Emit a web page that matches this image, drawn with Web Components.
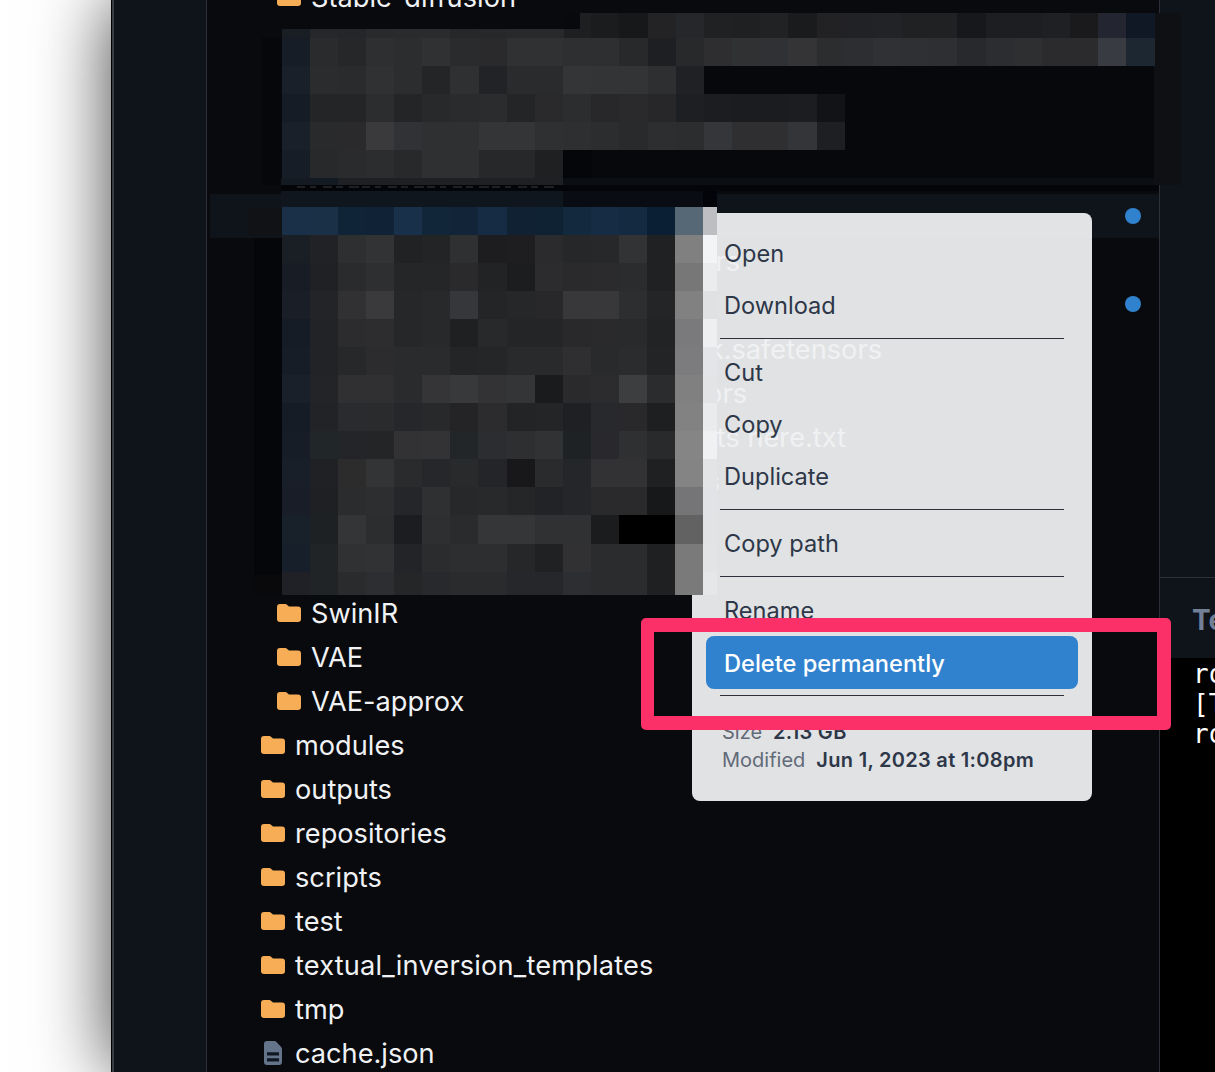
<!DOCTYPE html>
<html>
<head>
<meta charset="utf-8">
<style>
  html, body { margin: 0; height: 1072px; overflow: hidden; background: #fff; }
  body { font-family: Inter, "Liberation Sans", sans-serif; }
</style>
</head>
<body>
<app-window>
  <file-tree>
    <tree-row depth="2" type="folder">Stable-diffusion</tree-row>
    <tree-row depth="2"></tree-row>
    <tree-row depth="2"></tree-row>
    <tree-row depth="2"></tree-row>
    <tree-row depth="2"></tree-row>
    <tree-row depth="2" selected dot></tree-row>
    <tree-row depth="2" end="429">rs</tree-row>
    <tree-row depth="2" dot></tree-row>
    <tree-row depth="2" end="571">k.safetensors</tree-row>
    <tree-row depth="2" end="436">ors</tree-row>
    <tree-row depth="2" end="535">ts here.txt</tree-row>
    <tree-row depth="2" end="409">s</tree-row>
    <tree-row depth="2"></tree-row>
    <tree-row depth="2"></tree-row>
    <tree-row depth="2" type="folder">SwinIR</tree-row>
    <tree-row depth="2" type="folder">VAE</tree-row>
    <tree-row depth="2" type="folder">VAE-approx</tree-row>
    <tree-row depth="1" type="folder">modules</tree-row>
    <tree-row depth="1" type="folder">outputs</tree-row>
    <tree-row depth="1" type="folder">repositories</tree-row>
    <tree-row depth="1" type="folder">scripts</tree-row>
    <tree-row depth="1" type="folder">test</tree-row>
    <tree-row depth="1" type="folder" style="letter-spacing: .18px">textual_inversion_templates</tree-row>
    <tree-row depth="1" type="folder">tmp</tree-row>
    <tree-row depth="1" type="file">cache.json</tree-row>
  </file-tree>
  <terminal-pane slot="side"></terminal-pane>
</app-window>

<context-menu>
  <menu-item>Open</menu-item>
  <menu-item>Download</menu-item>
  <menu-line></menu-line>
  <menu-item>Cut</menu-item>
  <menu-item>Copy</menu-item>
  <menu-item>Duplicate</menu-item>
  <menu-line></menu-line>
  <menu-item>Copy path</menu-item>
  <menu-line></menu-line>
  <menu-item>Rename</menu-item>
  <menu-item active>Delete permanently</menu-item>
  <menu-line></menu-line>
  <menu-meta label="Size">2.13 GB</menu-meta>
  <menu-meta label="Modified">Jun 1, 2023 at 1:08pm</menu-meta>
</context-menu>

<blur-patch></blur-patch>
<mark-box></mark-box>

<script>
class AppWindow extends HTMLElement {
  constructor() {
    super();
    this.attachShadow({ mode: 'open' });
    this.shadowRoot.innerHTML = `
      <style>
        :host {
          display: flex;
          height: 1072px;
          margin-left: 111px;
          background: #090a0e;
          border-left: 1px solid #000;
          box-shadow: 0 0 70px rgba(0, 0, 0, .75);
          overflow: hidden;
        }
        .bar {
          flex: none;
          width: 92px;
          background: #0f131a;
          border-left: 2px solid #3a3c44;
          border-right: 1px solid #2d3038;
        }
        .main { flex: none; width: 952px; overflow: hidden; }
        .side { flex: 1; min-width: 0; border-left: 1px solid #2d3038; }
      </style>
      <div class="bar"></div>
      <div class="main"><slot></slot></div>
      <div class="side"><slot name="side"></slot></div>
    `;
  }
}

class FileTree extends HTMLElement {
  constructor() {
    super();
    this.attachShadow({ mode: 'open' });
    this.shadowRoot.innerHTML = `
      <style>
        :host { display: block; margin-top: -25px; color: #f0f2f5; font-size: 27.2px; }
      </style>
      <slot></slot>
    `;
  }
}

const ICONS = {
  folder: `<svg width="24" height="18" viewBox="0 0 24 18"><path fill="#f6ad55" d="M3 0h5.200c.8 0 1.500.3 2 .9L12 2.600h9a3 3 0 0 1 3 3V15a3 3 0 0 1-3 3H3a3 3 0 0 1-3-3V3a3 3 0 0 1 3-3z"/></svg>`,
  file: `<svg width="18" height="24" viewBox="0 0 18 24"><path fill="#64748b" d="M3 0h7.500c.8 0 1.500.3 2 .9l4.600 5c.6.6.9 1.300.9 2.100V21a3 3 0 0 1-3 3H3a3 3 0 0 1-3-3V3a3 3 0 0 1 3-3z"/><path fill="#111722" d="M3 11.200h12v3.200H3zM3 17.300h12v3.200H3z"/></svg>`
};

class TreeRow extends HTMLElement {
  constructor() {
    super();
    this.attachShadow({ mode: 'open' });
  }
  connectedCallback() {
    const depth = +this.getAttribute('depth');
    const type = this.getAttribute('type');
    const end = this.getAttribute('end');
    this.shadowRoot.innerHTML = `
      <style>
        :host {
          display: flex;
          align-items: center;
          height: 44px;
          padding-left: ${depth == 1 ? 261 - 207 : 277 - 207}px;
          padding-right: 18px;
          white-space: nowrap;
        }
        :host([selected]) { background: #0f131a; transform: translateY(-1px); }
        :host([selected]) .dot { transform: none; }
        .icon { flex: none; display: flex; justify-content: center; width: 24px; margin-right: 10px; }
        .name { flex: none; ${end ? `width: ${end}px; text-align: right;` : ''} }
        .dot { flex: none; margin-left: auto; width: 16px; height: 16px; border-radius: 50%; background: #3182ce; transform: translateY(-1px); }
      </style>
      <span class="icon">${ICONS[type] || ''}</span>
      <span class="name"><slot></slot></span>
      ${this.hasAttribute('dot') ? '<span class="dot"></span>' : ''}
    `;
  }
}

class TerminalPane extends HTMLElement {
  constructor() {
    super();
    this.attachShadow({ mode: 'open' });
    this.shadowRoot.innerHTML = `
      <style>
        :host { display: flex; flex-direction: column; height: 1072px; background: #0f131a; white-space: nowrap; }
        .top { flex: none; height: 577px; border-bottom: 1px solid #2d3038; }
        .tab { flex: none; height: 80px; line-height: 84px; padding-left: 32px; font-size: 28px; font-weight: 700; color: #718096; }
        .term {
          flex: 1;
          background: #000;
          padding: 1px 0 0 33px;
          color: #fff;
          font: 26px/30px "DejaVu Sans Mono", monospace;
        }
      </style>
      <div class="top"></div>
      <div class="tab">Te</div>
      <div class="term">ro<br>[T<br>ro</div>
    `;
  }
}

class ContextMenu extends HTMLElement {
  constructor() {
    super();
    this.attachShadow({ mode: 'open' });
    this.shadowRoot.innerHTML = `
      <style>
        :host {
          position: absolute;
          left: 692px;
          top: 213px;
          box-sizing: border-box;
          width: 400px;
          height: 588px;
          padding: 15px 14px;
          border-radius: 8px;
          background: rgba(239, 240, 242, .94);
          color: #2d3748;
          font-size: 23.6px;
        }
      </style>
      <slot></slot>
    `;
  }
}

class MenuItem extends HTMLElement {
  constructor() {
    super();
    this.attachShadow({ mode: 'open' });
    this.shadowRoot.innerHTML = `
      <style>
        :host { display: flex; align-items: center; box-sizing: border-box; height: 52px; padding: 0 0 2px 18px; border-radius: 8px; }
        :host([active]) {
          height: 53px;
          margin-top: -1px;
          margin-bottom: 1px;
          padding: 2px 0 0 18px;
          background: #3182ce;
          color: #fff;
          font-weight: 500;
        }
      </style>
      <slot></slot>
    `;
  }
}

class MenuLine extends HTMLElement {
  constructor() {
    super();
    this.attachShadow({ mode: 'open' });
    this.shadowRoot.innerHTML = `
      <style>
        :host { display: block; height: 1px; margin: 6px 14px 8px; background: #2d3038; }
      </style>
    `;
  }
}

class MenuMeta extends HTMLElement {
  constructor() {
    super();
    this.attachShadow({ mode: 'open' });
  }
  connectedCallback() {
    this.shadowRoot.innerHTML = `
      <style>
        :host { display: flex; gap: 11px; height: 28px; align-items: center; padding-left: 16px; font-size: 20px; font-weight: 600; letter-spacing: .3px; position: relative; top: 14px; }
        .label { color: #626a78; font-weight: 400; letter-spacing: 0; }
      </style>
      <span class="label">${this.getAttribute('label')}</span>
      <span><slot></slot></span>
    `;
  }
}

// colours read off the pixelated parts of the screenshot, one string per row
const PATCH_TOP = [
  [29, 9, '191d24 26272a 252629 292a2c 2a2b2d 2a2b2d 262729 27282a 28292b 28292b'],
  [38, 28, '161d27 2a2b2d 262729 2e2f31 2c2d2f 303133 2a2b2d 2a2a2c 303133 303133 2e2f31 2e2f31 28292b 1d1f22 27292b 2e2e30 303133 303134 343437 2c2d2f 2d2e31 303134 2f3033 2e2f32 28292c 2c2d30 2e2f31 2b2b2d 2b2b2d 393b42 1c2732'],
  [66, 28, '1a202a 2b2c2e 2a2b2d 303133 2c2d2e 242527 2f3032 222326 2a2b2d 2a2b2d 343537 333436 333436 2e2f31 1f2124'],
  [94, 28, '161c25 232527 242527 2c2d2f 232527 28292b 2a2b2d 2b2c2d 242527 2a2a2c 2c2d2f 28282b 2a2a2c 27272a 1d1f22 1c1d20 1b1c1f 1b1c1f 1b1d20 121316'],
  [122, 28, '1a202a 292a2c 2a2a2c 3a3a3d 313235 2f3032 2f3032 343537 343537 2f3032 2e2f31 2c2d2f 282a2c 2d2e30 2c2d2f 35363a 2f2f31 2f2f31 343538 1e1f22'],
  [150, 28, '171d27 28292b 2a2b2d 2c2d2f 28292b 2f3032 2f3032 27282a 27282a 1f2021 05060a']
];
const PATCH_TOP_RIGHT = '1b1c1e 17181a 232224 26272a 202123 1f2022 212224 1a1b1d 222225 212225 212326 1f2123 1f2123 16181b 1c1e21 1c1e21 1e2023 1a1a1c 232630 0f1824';
const PATCH_LOW = [
  [207, 28, '1a3048 193047 102438 102236 183049 12263a 112438 162c44 0f2133 0f2234 13293e 162c44 142a41 0a1f33 566775', 'bdbec1'],
  [235, 28, '1a1e25 202226 2e2f31 323335 212224 232425 2f3032 1d1d20 1e1e20 2b2b2d 262729 272829 323335 1f2122 808081', 'f3f4f6'],
  [263, 28, '181d25 1f2125 2a2b2d 2e2f31 252628 252628 2a2a2d 222325 1c1d1f 2c2c2e 2a2a2c 2b2b2d 2b2c2e 1f2122 777778', 'ebecee'],
  [291, 28, '1a1f27 222428 313133 3a3a3c 262729 28292b 36373a 232527 262729 28282a 38383a 38383a 2d2e30 242526 818182', 'e0e1e3'],
  [319, 28, '161c25 212326 2c2c2e 2d2d2f 262729 28292b 1f2022 28292b 242527 242527 29292b 2a2a2c 292a2c 222324 7a7a7c', 'eeeff1'],
  [347, 28, '171d26 212326 26282a 2c2c2f 2a2b2d 2a2b2d 232527 242628 292a2c 292a2c 2f2f31 292a2c 2b2c2e 232425 7c7c7e', 'e4e5e8'],
  [375, 28, '1a2029 222427 303032 303032 2a2b2d 353537 38393a 333335 343537 1a1b1d 2a2a2d 2c2c2f 3d3e40 2b2c2d 808081', 'e3e4e6'],
  [403, 28, '161c26 212326 2a2b2e 2a2b2d 26272a 28292b 242427 2c2c2f 222426 232527 1e2023 28292c 29292c 1e1f20 828283', 'eaebed'],
  [431, 28, '171d27 212628 232528 232527 323234 333335 232628 2c2d30 2e2f31 313233 1f2224 29292d 2f3032 292a2b 858586', 'f0f1f3'],
  [459, 28, '191f28 1f2124 2c2c2d 333436 2a2b2d 26272a 292a2c 242528 18181b 2a2b2d 25262a 323235 323235 1f2021 848485', 'e3e4e6'],
  [487, 28, '181d27 1e2023 2b2c2d 2d2e30 252629 2f3032 26282a 28292b 242628 222326 25262a 2a2a2d 2a2a2d 171819 757577', 'e2e3e6'],
  [515, 29, '18202a 1e2124 343536 2c2d2f 1c1d20 2e2f31 2a2b2d 353638 353638 303133 303133 1a1c1e 000000 000000 626263', 'e2e3e5'],
  [544, 28, '17202a 212427 303133 313234 232427 2b2c2e 2d2e30 2d2e30 262729 1f2123 313133 2b2c2e 2b2c2e 1f2021 7a7a7b', 'e3e4e6'],
  [572, 23, '1f2126 212427 2a2b2d 2d2e31 252628 28292c 2a2b2d 2a2b2d 26272a 26272a 2d2e31 2b2c2e 2b2c2e 1f2021 7a7a7b', 'e6e7e9']
];

class BlurPatch extends HTMLElement {
  constructor() {
    super();
    this.attachShadow({ mode: 'open' });
    const rect = (x, y, w, h, fill) => `<rect x="${x}" y="${y}" width="${w}" height="${h}" fill="${fill}"/>`;
    const cell = 28.16, left = 281.5;
    let out = '';
    // soft dark edges the blur left around the two blocks
    out += rect(262, 38, 20, 147, '#06070a');
    out += rect(281, 38, 873, 147, '#07080b');
    out += rect(1154, 13, 27, 172, '#0e1013');
    out += rect(563, 178, 591, 7, '#0b0e13');
    out += rect(281, 178, 57, 7, '#141a22');
    out += rect(338, 178, 225, 7, '#1f2024');
    out += rect(281, 185, 878, 6, '#040508');
    // tops of the letters that stick out under the top block
    for (let x = 297; x < 556; x += 13) {
      out += rect(x, 186, 6 + (x % 5), 2, '#1f2023');
    }
    out += rect(563, 13, 28, 25, '#1e1f21');
    out += rect(563, 13, 17, 16, '#08090c');
    out += rect(254, 238, 28, 337, '#05060a');
    out += rect(254, 575, 28, 20, '#09090c');
    out += rect(247, 207, 35, 28, '#111216');
    out += rect(207, 194, 3, 44, '#090a0e');
    out += rect(281, 191, 282, 16, '#10161e');
    out += rect(563, 191, 140, 16, '#090c12');
    out += rect(703, 191, 14, 16, '#03040a');

    PATCH_TOP.forEach(([y, h, row]) => {
      row.split(' ').forEach((c, i) => { out += rect(left + i * cell, y, cell + .5, h, '#' + c); });
    });
    PATCH_TOP_RIGHT.split(' ').forEach((c, i) => {
      out += rect(left + (i + 11) * cell, 13, cell + .5, 25, '#' + c);
    });
    PATCH_LOW.forEach(([y, h, row, strip]) => {
      row.split(' ').forEach((c, i) => { out += rect(left + i * 28.13, y, 28.6, h, '#' + c); });
      out += rect(703, y, 14, h, '#' + strip);
    });

    this.shadowRoot.innerHTML = `
      <style>
        :host { position: absolute; left: 0; top: 0; width: 1215px; height: 600px; pointer-events: none; }
        svg { display: block; }
      </style>
      <svg width="1215" height="600" shape-rendering="crispEdges">${out}</svg>
    `;
  }
}

class MarkBox extends HTMLElement {
  constructor() {
    super();
    this.attachShadow({ mode: 'open' });
    this.shadowRoot.innerHTML = `
      <style>
        :host {
          position: absolute;
          left: 641px;
          top: 618px;
          box-sizing: border-box;
          width: 530px;
          height: 112px;
          border: solid #fb3069;
          border-width: 14px 14px 14px 13px;
          border-radius: 5px;
        }
      </style>
    `;
  }
}

customElements.define('app-window', AppWindow);
customElements.define('file-tree', FileTree);
customElements.define('tree-row', TreeRow);
customElements.define('terminal-pane', TerminalPane);
customElements.define('context-menu', ContextMenu);
customElements.define('menu-item', MenuItem);
customElements.define('menu-line', MenuLine);
customElements.define('menu-meta', MenuMeta);
customElements.define('blur-patch', BlurPatch);
customElements.define('mark-box', MarkBox);
</script>
</body>
</html>
